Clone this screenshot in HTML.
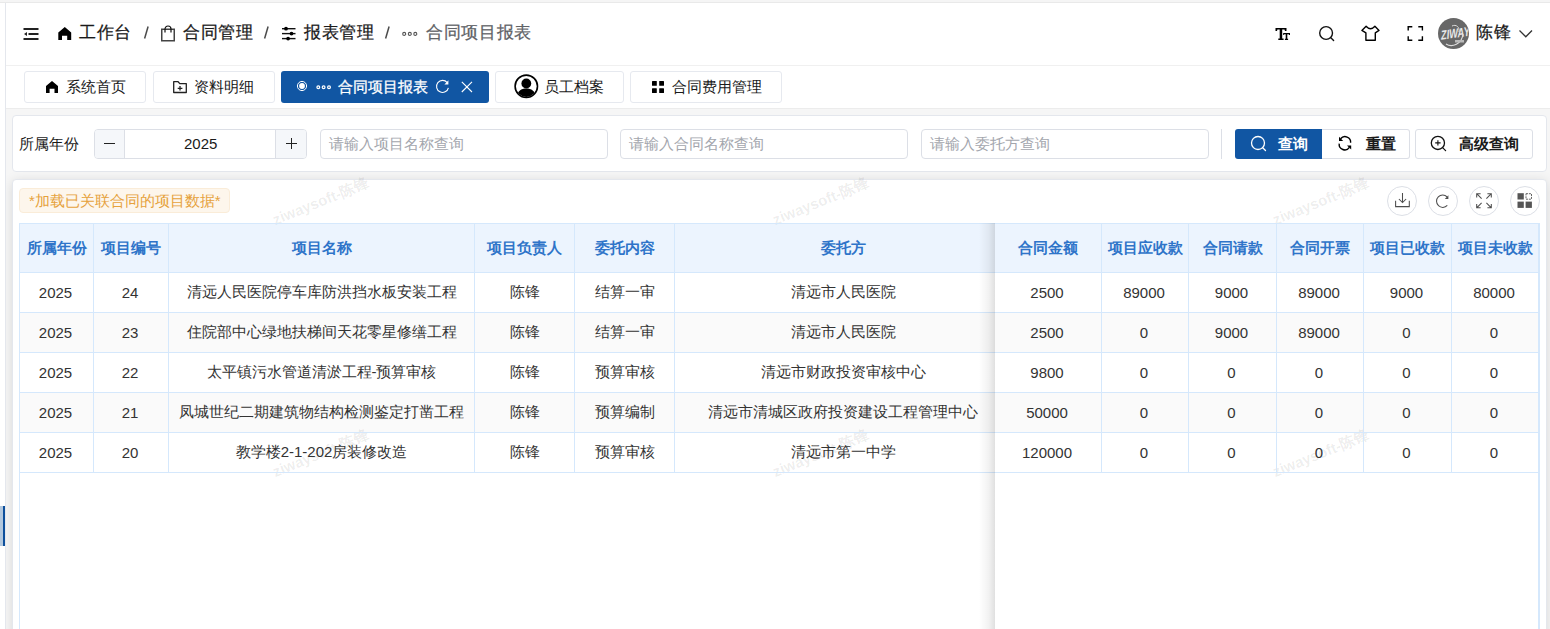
<!DOCTYPE html><html><head><meta charset="utf-8"><style>
*{box-sizing:border-box;margin:0;padding:0}
html,body{width:1550px;height:629px;overflow:hidden;background:#fff;font-family:"Liberation Sans",sans-serif;color:#303133}
.a{position:absolute}
.t{position:absolute;white-space:nowrap;line-height:1}
svg{position:absolute;overflow:visible}
</style></head><body>
<div class="a" style="left:0;top:0;width:1550px;height:2px;background:#f5f5f5"></div>
<div class="a" style="left:0;top:2px;width:1550px;height:1px;background:#e9e9e9"></div>
<div class="a" style="left:6px;top:65px;width:1544px;height:1px;background:#f0f0f0"></div>
<div class="a" style="left:6px;top:108px;width:1544px;height:521px;background:#f6f6f6"></div>
<div class="a" style="left:6px;top:108px;width:1544px;height:1px;background:#ececec"></div>
<svg style="left:23px;top:27px" width="16" height="14" viewBox="0 0 16 14">
<rect x="0.5" y="1" width="15" height="2" fill="#222"/>
<rect x="5.5" y="6" width="10" height="2" fill="#222"/>
<rect x="0.5" y="11" width="15" height="2" fill="#222"/>
<path d="M1 7 L4 5 L4 9 Z" fill="#222"/></svg>
<svg style="left:58px;top:27px" width="14" height="14" viewBox="0 0 14 14">
<path d="M0.3 5.5 L6.8 0 L13.2 5.5 L13.2 13 L9.2 13 L9.2 8.8 L4 8.8 L4 13 L0.3 13 Z" fill="#000"/></svg>
<div class="t" style="left:79px;top:24px;font-size:17px;color:#1a1a1a;font-weight:normal;letter-spacing:0.7px;-webkit-text-stroke:0.25px #1a1a1a;">工作台</div>
<svg style="left:143.6px;top:26px" width="5" height="13" viewBox="0 0 5 13"><line x1="4.1" y1="0.5" x2="0.6" y2="12.5" stroke="#4a4a4a" stroke-width="1.5"/></svg>
<svg style="left:161px;top:25px" width="14" height="17" viewBox="0 0 14 17">
<rect x="0.75" y="4.25" width="12.5" height="11.5" fill="none" stroke="#444" stroke-width="1.5"/>
<path d="M4 7.5 V4 A3 3 0 0 1 10 4 V7.5" fill="none" stroke="#111" stroke-width="1.2"/></svg>
<div class="t" style="left:183px;top:24px;font-size:17px;color:#1a1a1a;font-weight:normal;letter-spacing:0.7px;-webkit-text-stroke:0.25px #1a1a1a;">合同管理</div>
<svg style="left:264px;top:26px" width="5" height="13" viewBox="0 0 5 13"><line x1="4.1" y1="0.5" x2="0.6" y2="12.5" stroke="#4a4a4a" stroke-width="1.5"/></svg>
<svg style="left:282px;top:26px" width="14" height="15" viewBox="0 0 14 15">
<g stroke="#111" stroke-width="1.4"><line x1="0" y1="2.7" x2="13.5" y2="2.7"/><line x1="0" y1="7.6" x2="13.5" y2="7.6"/><line x1="0" y1="12.6" x2="13.5" y2="12.6"/></g>
<g fill="#000"><circle cx="4" cy="2.7" r="1.9"/><circle cx="9.5" cy="7.6" r="1.9"/><circle cx="6.1" cy="12.6" r="1.9"/></g></svg>
<div class="t" style="left:304px;top:24px;font-size:17px;color:#1a1a1a;font-weight:normal;letter-spacing:0.7px;-webkit-text-stroke:0.25px #1a1a1a;">报表管理</div>
<svg style="left:385.3px;top:26px" width="5" height="13" viewBox="0 0 5 13"><line x1="4.1" y1="0.5" x2="0.6" y2="12.5" stroke="#4a4a4a" stroke-width="1.5"/></svg>
<svg style="left:402px;top:31px" width="16" height="6" viewBox="0 0 16 6">
<g fill="none" stroke="#555" stroke-width="1.1"><circle cx="2.2" cy="2.9" r="1.5"/><circle cx="7.8" cy="2.9" r="1.5"/><circle cx="13.3" cy="2.9" r="1.5"/></g></svg>
<div class="t" style="left:426px;top:24px;font-size:17px;color:#606266;font-weight:normal;letter-spacing:0.7px;-webkit-text-stroke:0.25px #606266;">合同项目报表</div>
<svg style="left:1275px;top:27px" width="16" height="14" viewBox="0 0 16 14">
<path d="M0.5 1 H11.5 V4 H10 L9.5 2.6 H7.2 V11.4 H8.6 V13 H3.3 V11.4 H4.7 V2.6 H2.4 L2 4 H0.5 Z" fill="#000"/>
<path d="M8.2 6 H15 V8 H14 L13.7 7.2 H12.3 V11.8 H13.1 V13 H9.9 V11.8 H10.7 V7.2 H9.3 L9 8 H8.2 Z" fill="#000"/></svg>
<svg style="left:1318px;top:25px" width="17" height="17" viewBox="0 0 17 17">
<circle cx="8.1" cy="8" r="6.4" fill="none" stroke="#111" stroke-width="1.4"/>
<line x1="12.8" y1="12.7" x2="15.6" y2="15.5" stroke="#111" stroke-width="1.4" stroke-linecap="round"/></svg>
<svg style="left:1361px;top:25px" width="20" height="17" viewBox="0 0 20 17">
<path d="M5.1 1.3 Q9.5 6.2 13.9 1.3 L18 5.4 L14.3 7.8 V15.3 H4.9 V7.8 L0.9 5.4 Z" fill="none" stroke="#000" stroke-width="1.4" stroke-linejoin="round"/></svg>
<svg style="left:1407px;top:25px" width="17" height="17" viewBox="0 0 17 17">
<path d="M1.2 5.5 V1.8 H5.3 M11.3 1.8 H15.4 V5.5 M15.4 11.2 V15.3 H11.3 M5.3 15.3 H1.2 V11.2" fill="none" stroke="#000" stroke-width="1.4"/></svg>
<div class="a" style="left:1438px;top:18px;width:31px;height:31px;border-radius:50%;background:#676767;overflow:hidden">
<div class="t" style="left:-2px;top:9px;width:35px;text-align:center;font-size:13px;font-weight:bold;color:#e8e8e8;font-style:italic;transform:scaleX(0.72) rotate(-6deg)">ZIWAY</div>
<svg style="left:0;top:0" width="31" height="31" viewBox="0 0 31 31"><path d="M8 26 C14 30 24 26 25 16" fill="none" stroke="#ddd" stroke-width="1.2"/><path d="M14 8 C18 6 22 9 21 14" fill="none" stroke="#ddd" stroke-width="1"/>
<rect x="17" y="22" width="9" height="2.5" fill="#bbb"/></svg></div>
<div class="t" style="left:1476px;top:24px;font-size:17px;color:#1a1a1a;font-weight:normal;letter-spacing:0.7px;-webkit-text-stroke:0.25px #1a1a1a;">陈锋</div>
<svg style="left:1518px;top:29px" width="16" height="10" viewBox="0 0 16 10">
<path d="M1.5 1.5 L7.8 7.8 L14 1.5" fill="none" stroke="#333" stroke-width="1.3"/></svg>
<div class="a" style="left:24px;top:71px;width:122px;height:32px;background:#fff;border:1px solid #e6e9ef;border-radius:3px"></div>
<div class="a" style="left:153px;top:71px;width:122px;height:32px;background:#fff;border:1px solid #e6e9ef;border-radius:3px"></div>
<div class="a" style="left:281px;top:71px;width:208px;height:32px;background:#1156a3;border-radius:3px"></div>
<div class="a" style="left:495px;top:71px;width:129px;height:32px;background:#fff;border:1px solid #e6e9ef;border-radius:3px"></div>
<div class="a" style="left:630px;top:71px;width:152px;height:32px;background:#fff;border:1px solid #e6e9ef;border-radius:3px"></div>
<svg style="left:46px;top:81px" width="13" height="12" viewBox="0 0 13 12">
<path d="M0 5 L6 0 L12 5 V12 H8.5 V7.8 H3.6 V12 H0 Z" fill="#000"/></svg>
<div class="t" style="left:66px;top:79px;font-size:15px;color:#1a1a1a;font-weight:normal;">系统首页</div>
<svg style="left:173px;top:81px" width="15" height="13" viewBox="0 0 15 13">
<path d="M0.7 0.7 H5.1 L6.8 2.6 H13.3 V11.5 H0.7 Z" fill="none" stroke="#222" stroke-width="1.3" stroke-linejoin="round"/>
<path d="M7 5 V9.6 M4.7 7.3 H9.4" stroke="#222" stroke-width="1.3"/></svg>
<div class="t" style="left:194px;top:79px;font-size:15px;color:#1a1a1a;font-weight:normal;">资料明细</div>
<svg style="left:296px;top:80px" width="12" height="12" viewBox="0 0 12 12">
<circle cx="6" cy="6" r="4.6" fill="none" stroke="#fff" stroke-width="1"/><circle cx="6" cy="6" r="2.9" fill="#fff"/></svg>
<svg style="left:316px;top:84px" width="16" height="6" viewBox="0 0 16 6">
<g fill="none" stroke="#fff" stroke-width="1.2"><circle cx="2.3" cy="3.3" r="1.4"/><circle cx="7.6" cy="3.3" r="1.4"/><circle cx="13" cy="3.3" r="1.4"/></g></svg>
<div class="t" style="left:338px;top:79px;font-size:15px;color:#fff;font-weight:normal;-webkit-text-stroke:0.3px #fff;">合同项目报表</div>
<svg style="left:435px;top:79px" width="16" height="16" viewBox="0 0 16 16">
<path d="M13.4 8.8 A6 6 0 1 1 12.2 3.6" fill="none" stroke="#fff" stroke-width="1.1"/>
<path d="M13.4 1.2 V5.4 H9.4 Z" fill="#fff"/></svg>
<svg style="left:461px;top:81px" width="12" height="12" viewBox="0 0 12 12">
<path d="M0.8 0.8 L11 11 M11 0.8 L0.8 11" stroke="#fff" stroke-width="1.1"/></svg>
<svg style="left:514px;top:74px" width="25" height="25" viewBox="0 0 25 25">
<defs><clipPath id="cp"><circle cx="12.3" cy="12.3" r="10.6"/></clipPath></defs>
<circle cx="12.3" cy="12.3" r="11.2" fill="none" stroke="#000" stroke-width="1.6"/>
<circle cx="12.3" cy="9.5" r="4.9" fill="#000"/>
<path d="M3 24 C3 17 7 14.5 12.3 14.5 C17.6 14.5 21.6 17 21.6 24 Z" fill="#000" clip-path="url(#cp)"/></svg>
<div class="t" style="left:544px;top:79px;font-size:15px;color:#1a1a1a;font-weight:normal;">员工档案</div>
<svg style="left:652px;top:81px" width="13" height="13" viewBox="0 0 13 13">
<g fill="#000"><rect x="0" y="0" width="4.8" height="4.8" rx="0.5"/><rect x="7.2" y="0" width="4.8" height="4.8" rx="0.5"/><rect x="0" y="7.2" width="4.8" height="4.8" rx="0.5"/><rect x="7.2" y="7.2" width="4.8" height="4.8" rx="0.5"/></g></svg>
<div class="t" style="left:672px;top:79px;font-size:15px;color:#1a1a1a;font-weight:normal;">合同费用管理</div>
<div class="a" style="left:12px;top:115px;width:1535px;height:57px;background:#fff;border:1px solid #e4e7ed;border-radius:4px"></div>
<div class="t" style="left:19px;top:136px;font-size:15px;color:#1a1a1a;font-weight:normal;">所属年份</div>
<div class="a" style="left:94px;top:129px;width:213px;height:30px;border:1px solid #dcdfe6;border-radius:4px;background:#fff;overflow:hidden"><div class="a" style="left:0;top:0;width:30px;height:28px;background:#f5f7fa;border-right:1px solid #dcdfe6"></div><div class="a" style="right:0;top:0;width:31px;height:28px;background:#f5f7fa;border-left:1px solid #dcdfe6"></div></div>
<div class="a" style="left:104px;top:143px;width:11px;height:1px;background:#222"></div>
<div class="a" style="left:286px;top:143px;width:11px;height:1px;background:#222"></div>
<div class="a" style="left:291px;top:138px;width:1px;height:11px;background:#222"></div>
<div class="t" style="left:184px;top:136px;font-size:15px;color:#1a1a1a;font-weight:normal;">2025</div>
<div class="a" style="left:320px;top:129px;width:288px;height:30px;border:1px solid #dcdfe6;border-radius:4px;background:#fff"></div>
<div class="t" style="left:329px;top:136px;font-size:15px;color:#a3a6ad;font-weight:normal;">请输入项目名称查询</div>
<div class="a" style="left:620px;top:129px;width:288px;height:30px;border:1px solid #dcdfe6;border-radius:4px;background:#fff"></div>
<div class="t" style="left:629px;top:136px;font-size:15px;color:#a3a6ad;font-weight:normal;">请输入合同名称查询</div>
<div class="a" style="left:921px;top:129px;width:288px;height:30px;border:1px solid #dcdfe6;border-radius:4px;background:#fff"></div>
<div class="t" style="left:930px;top:136px;font-size:15px;color:#a3a6ad;font-weight:normal;">请输入委托方查询</div>
<div class="a" style="left:1221px;top:129px;width:1px;height:30px;background:#dcdfe6"></div>
<div class="a" style="left:1235px;top:129px;width:88px;height:30px;background:#1156a3;border-radius:3px 0 0 3px"></div>
<div class="a" style="left:1322px;top:129px;width:88px;height:30px;border:1px solid #dcdfe6;border-left:none;border-radius:0 3px 3px 0;background:#fff"></div>
<div class="a" style="left:1415px;top:129px;width:118px;height:30px;border:1px solid #dcdfe6;border-radius:3px;background:#fff"></div>
<svg style="left:1250px;top:135px" width="17" height="17" viewBox="0 0 17 17">
<circle cx="8" cy="8" r="6.5" fill="none" stroke="#fff" stroke-width="1.3"/>
<line x1="12.7" y1="12.7" x2="15.5" y2="15.5" stroke="#fff" stroke-width="1.3" stroke-linecap="round"/></svg>
<div class="t" style="left:1278px;top:136px;font-size:15px;color:#fff;font-weight:bold;">查询</div>
<svg style="left:1338px;top:136px" width="15" height="15" viewBox="0 0 15 15">
<path d="M12.6 6.8 A5.6 5.6 0 0 0 2.6 2.8" fill="none" stroke="#000" stroke-width="1.4"/>
<path d="M1 0.8 V5 H5.2 Z" fill="#000"/>
<path d="M1.2 7.6 A5.6 5.6 0 0 0 11.4 11.4" fill="none" stroke="#000" stroke-width="1.4"/>
<path d="M13.2 13.6 V9.4 H9 Z" fill="#000"/></svg>
<div class="t" style="left:1366px;top:136px;font-size:15px;color:#1a1a1a;font-weight:bold;">重置</div>
<svg style="left:1430px;top:135px" width="17" height="17" viewBox="0 0 17 17">
<circle cx="7.9" cy="7.9" r="6.6" fill="none" stroke="#111" stroke-width="1.3"/>
<line x1="12.6" y1="12.6" x2="15.6" y2="15.6" stroke="#111" stroke-width="1.3" stroke-linecap="round"/>
<path d="M7.9 5.2 V10.6 M5.2 7.9 H10.6" stroke="#111" stroke-width="1.1"/></svg>
<div class="t" style="left:1459px;top:136px;font-size:15px;color:#1a1a1a;font-weight:bold;">高级查询</div>
<div class="a" style="left:12px;top:179px;width:1535px;height:460px;background:#fff;border:1px solid #e4e7ed;border-radius:4px;box-shadow:0 2px 12px rgba(0,0,0,0.12)"></div>
<div class="a" style="left:19px;top:188px;width:211px;height:25px;background:#fdf6ec;border:1px solid #faecd8;border-radius:4px"></div>
<div class="t" style="left:29px;top:193px;font-size:15px;color:#e6a23c;font-weight:normal;">*加载已关联合同的项目数据*</div>
<div class="a" style="left:1387px;top:186px;width:30px;height:30px;border:1px solid #dcdfe6;border-radius:50%;background:#fff"></div>
<div class="a" style="left:1428px;top:186px;width:30px;height:30px;border:1px solid #dcdfe6;border-radius:50%;background:#fff"></div>
<div class="a" style="left:1469px;top:186px;width:30px;height:30px;border:1px solid #dcdfe6;border-radius:50%;background:#fff"></div>
<div class="a" style="left:1510px;top:186px;width:30px;height:30px;border:1px solid #dcdfe6;border-radius:50%;background:#fff"></div>
<svg style="left:1395px;top:193px" width="15" height="15" viewBox="0 0 15 15">
<path d="M7.5 0 V9.6 M3.9 6 L7.5 9.6 L11.1 6 M0.6 7.8 V13.6 H14.3 V7.8" fill="none" stroke="#4d4d4d" stroke-width="1.05"/></svg>
<svg style="left:1435px;top:194px" width="15" height="15" viewBox="0 0 15 15">
<path d="M12.3 11.4 A6.2 6.2 0 1 1 12.1 2.8" fill="none" stroke="#4d4d4d" stroke-width="1.05"/>
<path d="M13.4 1.3 V4.9 H9.8 Z" fill="#4d4d4d"/></svg>
<svg style="left:1476px;top:192.5px" width="17" height="16" viewBox="0 0 17 16">
<path d="M0.7 4.6 V0.7 H4.6 M0.7 0.7 L5.6 5.6 M15.3 4.6 V0.7 H11.4 M15.3 0.7 L10.4 5.6 M0.7 10.9 V14.8 H4.6 M0.7 14.8 L5.6 9.9 M15.3 10.9 V14.8 H11.4 M15.3 14.8 L10.4 9.9" fill="none" stroke="#4d4d4d" stroke-width="1.05"/></svg>
<svg style="left:1517px;top:193px" width="16" height="16" viewBox="0 0 16 16">
<rect x="0.5" y="0.2" width="6.3" height="6.3" fill="#555"/>
<rect x="9" y="0.7" width="5.5" height="5.5" fill="none" stroke="#555" stroke-width="0.9" stroke-dasharray="2 0.9"/>
<rect x="0.5" y="8.6" width="6.3" height="6.3" fill="#555"/><rect x="8.6" y="8.6" width="6.3" height="6.3" fill="#555"/></svg>
<div class="a" style="left:19px;top:223px;width:1521px;height:50px;background:#ecf4fe"></div>
<div class="a" style="left:20px;top:273px;width:1519px;height:39px;background:#fff"></div>
<div class="a" style="left:20px;top:313px;width:1519px;height:39px;background:#fafafa"></div>
<div class="a" style="left:20px;top:353px;width:1519px;height:39px;background:#fff"></div>
<div class="a" style="left:20px;top:393px;width:1519px;height:39px;background:#fafafa"></div>
<div class="a" style="left:20px;top:433px;width:1519px;height:39px;background:#fff"></div>
<div class="t" style="left:276px;top:212px;font-size:15px;font-weight:bold;color:rgba(0,0,0,0.08);transform:rotate(-22deg);transform-origin:0 100%">ziwaysoft-陈锋</div>
<div class="t" style="left:776px;top:212px;font-size:15px;font-weight:bold;color:rgba(0,0,0,0.08);transform:rotate(-22deg);transform-origin:0 100%">ziwaysoft-陈锋</div>
<div class="t" style="left:1276px;top:212px;font-size:15px;font-weight:bold;color:rgba(0,0,0,0.08);transform:rotate(-22deg);transform-origin:0 100%">ziwaysoft-陈锋</div>
<div class="t" style="left:276px;top:464px;font-size:15px;font-weight:bold;color:rgba(0,0,0,0.08);transform:rotate(-22deg);transform-origin:0 100%">ziwaysoft-陈锋</div>
<div class="t" style="left:776px;top:464px;font-size:15px;font-weight:bold;color:rgba(0,0,0,0.08);transform:rotate(-22deg);transform-origin:0 100%">ziwaysoft-陈锋</div>
<div class="t" style="left:1276px;top:464px;font-size:15px;font-weight:bold;color:rgba(0,0,0,0.08);transform:rotate(-22deg);transform-origin:0 100%">ziwaysoft-陈锋</div>
<div class="a" style="left:19px;top:223px;width:1521px;height:1px;background:#d5e8fc"></div>
<div class="a" style="left:19px;top:272px;width:1521px;height:1px;background:#d5e8fc"></div>
<div class="a" style="left:19px;top:312px;width:1521px;height:1px;background:#d5e8fc"></div>
<div class="a" style="left:19px;top:352px;width:1521px;height:1px;background:#d5e8fc"></div>
<div class="a" style="left:19px;top:392px;width:1521px;height:1px;background:#d5e8fc"></div>
<div class="a" style="left:19px;top:432px;width:1521px;height:1px;background:#d5e8fc"></div>
<div class="a" style="left:19px;top:472px;width:1521px;height:1px;background:#d5e8fc"></div>
<div class="a" style="left:19px;top:223px;width:1px;height:406px;background:#d5e8fc"></div>
<div class="a" style="left:93px;top:223px;width:1px;height:250px;background:#d5e8fc"></div>
<div class="a" style="left:168px;top:223px;width:1px;height:250px;background:#d5e8fc"></div>
<div class="a" style="left:474px;top:223px;width:1px;height:250px;background:#d5e8fc"></div>
<div class="a" style="left:574px;top:223px;width:1px;height:250px;background:#d5e8fc"></div>
<div class="a" style="left:674px;top:223px;width:1px;height:250px;background:#d5e8fc"></div>
<div class="a" style="left:20px;top:224px;width:73px;height:48px;display:flex;align-items:center;justify-content:center;white-space:nowrap;font-size:15px;font-weight:bold;color:#2f74c9">所属年份</div>
<div class="a" style="left:94px;top:224px;width:74px;height:48px;display:flex;align-items:center;justify-content:center;white-space:nowrap;font-size:15px;font-weight:bold;color:#2f74c9">项目编号</div>
<div class="a" style="left:169px;top:224px;width:305px;height:48px;display:flex;align-items:center;justify-content:center;white-space:nowrap;font-size:15px;font-weight:bold;color:#2f74c9">项目名称</div>
<div class="a" style="left:475px;top:224px;width:99px;height:48px;display:flex;align-items:center;justify-content:center;white-space:nowrap;font-size:15px;font-weight:bold;color:#2f74c9">项目负责人</div>
<div class="a" style="left:575px;top:224px;width:99px;height:48px;display:flex;align-items:center;justify-content:center;white-space:nowrap;font-size:15px;font-weight:bold;color:#2f74c9">委托内容</div>
<div class="a" style="left:675px;top:224px;width:336px;height:48px;display:flex;align-items:center;justify-content:center;white-space:nowrap;font-size:15px;font-weight:bold;color:#2f74c9">委托方</div>
<div class="a" style="left:20px;top:273px;width:73px;height:39px;display:flex;align-items:center;justify-content:center;white-space:nowrap;font-size:15px;color:#333;padding-right:2px">2025</div>
<div class="a" style="left:94px;top:273px;width:74px;height:39px;display:flex;align-items:center;justify-content:center;white-space:nowrap;font-size:15px;color:#333;padding-right:2px">24</div>
<div class="a" style="left:169px;top:273px;width:305px;height:39px;display:flex;align-items:center;justify-content:center;white-space:nowrap;font-size:15px;color:#333">清远人民医院停车库防洪挡水板安装工程</div>
<div class="a" style="left:475px;top:273px;width:99px;height:39px;display:flex;align-items:center;justify-content:center;white-space:nowrap;font-size:15px;color:#333">陈锋</div>
<div class="a" style="left:575px;top:273px;width:99px;height:39px;display:flex;align-items:center;justify-content:center;white-space:nowrap;font-size:15px;color:#333">结算一审</div>
<div class="a" style="left:675px;top:273px;width:336px;height:39px;display:flex;align-items:center;justify-content:center;white-space:nowrap;font-size:15px;color:#333">清远市人民医院</div>
<div class="a" style="left:20px;top:313px;width:73px;height:39px;display:flex;align-items:center;justify-content:center;white-space:nowrap;font-size:15px;color:#333;padding-right:2px">2025</div>
<div class="a" style="left:94px;top:313px;width:74px;height:39px;display:flex;align-items:center;justify-content:center;white-space:nowrap;font-size:15px;color:#333;padding-right:2px">23</div>
<div class="a" style="left:169px;top:313px;width:305px;height:39px;display:flex;align-items:center;justify-content:center;white-space:nowrap;font-size:15px;color:#333">住院部中心绿地扶梯间天花零星修缮工程</div>
<div class="a" style="left:475px;top:313px;width:99px;height:39px;display:flex;align-items:center;justify-content:center;white-space:nowrap;font-size:15px;color:#333">陈锋</div>
<div class="a" style="left:575px;top:313px;width:99px;height:39px;display:flex;align-items:center;justify-content:center;white-space:nowrap;font-size:15px;color:#333">结算一审</div>
<div class="a" style="left:675px;top:313px;width:336px;height:39px;display:flex;align-items:center;justify-content:center;white-space:nowrap;font-size:15px;color:#333">清远市人民医院</div>
<div class="a" style="left:20px;top:353px;width:73px;height:39px;display:flex;align-items:center;justify-content:center;white-space:nowrap;font-size:15px;color:#333;padding-right:2px">2025</div>
<div class="a" style="left:94px;top:353px;width:74px;height:39px;display:flex;align-items:center;justify-content:center;white-space:nowrap;font-size:15px;color:#333;padding-right:2px">22</div>
<div class="a" style="left:169px;top:353px;width:305px;height:39px;display:flex;align-items:center;justify-content:center;white-space:nowrap;font-size:15px;color:#333">太平镇污水管道清淤工程-预算审核</div>
<div class="a" style="left:475px;top:353px;width:99px;height:39px;display:flex;align-items:center;justify-content:center;white-space:nowrap;font-size:15px;color:#333">陈锋</div>
<div class="a" style="left:575px;top:353px;width:99px;height:39px;display:flex;align-items:center;justify-content:center;white-space:nowrap;font-size:15px;color:#333">预算审核</div>
<div class="a" style="left:675px;top:353px;width:336px;height:39px;display:flex;align-items:center;justify-content:center;white-space:nowrap;font-size:15px;color:#333">清远市财政投资审核中心</div>
<div class="a" style="left:20px;top:393px;width:73px;height:39px;display:flex;align-items:center;justify-content:center;white-space:nowrap;font-size:15px;color:#333;padding-right:2px">2025</div>
<div class="a" style="left:94px;top:393px;width:74px;height:39px;display:flex;align-items:center;justify-content:center;white-space:nowrap;font-size:15px;color:#333;padding-right:2px">21</div>
<div class="a" style="left:169px;top:393px;width:305px;height:39px;display:flex;align-items:center;justify-content:center;white-space:nowrap;font-size:15px;color:#333">凤城世纪二期建筑物结构检测鉴定打凿工程</div>
<div class="a" style="left:475px;top:393px;width:99px;height:39px;display:flex;align-items:center;justify-content:center;white-space:nowrap;font-size:15px;color:#333">陈锋</div>
<div class="a" style="left:575px;top:393px;width:99px;height:39px;display:flex;align-items:center;justify-content:center;white-space:nowrap;font-size:15px;color:#333">预算编制</div>
<div class="a" style="left:675px;top:393px;width:336px;height:39px;display:flex;align-items:center;justify-content:center;white-space:nowrap;font-size:15px;color:#333">清远市清城区政府投资建设工程管理中心</div>
<div class="a" style="left:20px;top:433px;width:73px;height:39px;display:flex;align-items:center;justify-content:center;white-space:nowrap;font-size:15px;color:#333;padding-right:2px">2025</div>
<div class="a" style="left:94px;top:433px;width:74px;height:39px;display:flex;align-items:center;justify-content:center;white-space:nowrap;font-size:15px;color:#333;padding-right:2px">20</div>
<div class="a" style="left:169px;top:433px;width:305px;height:39px;display:flex;align-items:center;justify-content:center;white-space:nowrap;font-size:15px;color:#333">教学楼2-1-202房装修改造</div>
<div class="a" style="left:475px;top:433px;width:99px;height:39px;display:flex;align-items:center;justify-content:center;white-space:nowrap;font-size:15px;color:#333">陈锋</div>
<div class="a" style="left:575px;top:433px;width:99px;height:39px;display:flex;align-items:center;justify-content:center;white-space:nowrap;font-size:15px;color:#333">预算审核</div>
<div class="a" style="left:675px;top:433px;width:336px;height:39px;display:flex;align-items:center;justify-content:center;white-space:nowrap;font-size:15px;color:#333">清远市第一中学</div>
<div class="a" style="left:979px;top:223px;width:16px;height:406px;background:linear-gradient(to left,rgba(0,0,0,0.12),rgba(0,0,0,0.05) 40%,rgba(0,0,0,0))"></div>
<div class="a" style="left:995px;top:223px;width:545px;height:406px;background:#fff"></div>
<div class="a" style="left:995px;top:223px;width:545px;height:50px;background:#ecf4fe"></div>
<div class="a" style="left:995px;top:273px;width:544px;height:39px;background:#fff"></div>
<div class="a" style="left:995px;top:313px;width:544px;height:39px;background:#fafafa"></div>
<div class="a" style="left:995px;top:353px;width:544px;height:39px;background:#fff"></div>
<div class="a" style="left:995px;top:393px;width:544px;height:39px;background:#fafafa"></div>
<div class="a" style="left:995px;top:433px;width:544px;height:39px;background:#fff"></div>
<div class="t" style="left:1276px;top:464px;font-size:15px;font-weight:bold;color:rgba(0,0,0,0.08);transform:rotate(-22deg);transform-origin:0 100%">ziwaysoft-陈锋</div>
<div class="a" style="left:995px;top:223px;width:545px;height:1px;background:#d5e8fc"></div>
<div class="a" style="left:995px;top:272px;width:545px;height:1px;background:#d5e8fc"></div>
<div class="a" style="left:995px;top:312px;width:545px;height:1px;background:#d5e8fc"></div>
<div class="a" style="left:995px;top:352px;width:545px;height:1px;background:#d5e8fc"></div>
<div class="a" style="left:995px;top:392px;width:545px;height:1px;background:#d5e8fc"></div>
<div class="a" style="left:995px;top:432px;width:545px;height:1px;background:#d5e8fc"></div>
<div class="a" style="left:995px;top:472px;width:545px;height:1px;background:#d5e8fc"></div>
<div class="a" style="left:1101px;top:223px;width:1px;height:250px;background:#d5e8fc"></div>
<div class="a" style="left:1188px;top:223px;width:1px;height:250px;background:#d5e8fc"></div>
<div class="a" style="left:1276px;top:223px;width:1px;height:250px;background:#d5e8fc"></div>
<div class="a" style="left:1363px;top:223px;width:1px;height:250px;background:#d5e8fc"></div>
<div class="a" style="left:1451px;top:223px;width:1px;height:250px;background:#d5e8fc"></div>
<div class="a" style="left:1538px;top:223px;width:1px;height:250px;background:#d5e8fc"></div>
<div class="a" style="left:1538px;top:223px;width:2px;height:406px;background:#d5e8fc"></div>
<div class="a" style="left:995px;top:224px;width:106px;height:48px;display:flex;align-items:center;justify-content:center;white-space:nowrap;font-size:15px;font-weight:bold;color:#2f74c9">合同金额</div>
<div class="a" style="left:1102px;top:224px;width:86px;height:48px;display:flex;align-items:center;justify-content:center;white-space:nowrap;font-size:15px;font-weight:bold;color:#2f74c9">项目应收款</div>
<div class="a" style="left:1189px;top:224px;width:87px;height:48px;display:flex;align-items:center;justify-content:center;white-space:nowrap;font-size:15px;font-weight:bold;color:#2f74c9">合同请款</div>
<div class="a" style="left:1277px;top:224px;width:86px;height:48px;display:flex;align-items:center;justify-content:center;white-space:nowrap;font-size:15px;font-weight:bold;color:#2f74c9">合同开票</div>
<div class="a" style="left:1364px;top:224px;width:87px;height:48px;display:flex;align-items:center;justify-content:center;white-space:nowrap;font-size:15px;font-weight:bold;color:#2f74c9">项目已收款</div>
<div class="a" style="left:1452px;top:224px;width:86px;height:48px;display:flex;align-items:center;justify-content:center;white-space:nowrap;font-size:15px;font-weight:bold;color:#2f74c9">项目未收款</div>
<div class="a" style="left:995px;top:273px;width:106px;height:39px;display:flex;align-items:center;justify-content:center;white-space:nowrap;font-size:15px;color:#333;padding-right:2px">2500</div>
<div class="a" style="left:1102px;top:273px;width:86px;height:39px;display:flex;align-items:center;justify-content:center;white-space:nowrap;font-size:15px;color:#333;padding-right:2px">89000</div>
<div class="a" style="left:1189px;top:273px;width:87px;height:39px;display:flex;align-items:center;justify-content:center;white-space:nowrap;font-size:15px;color:#333;padding-right:2px">9000</div>
<div class="a" style="left:1277px;top:273px;width:86px;height:39px;display:flex;align-items:center;justify-content:center;white-space:nowrap;font-size:15px;color:#333;padding-right:2px">89000</div>
<div class="a" style="left:1364px;top:273px;width:87px;height:39px;display:flex;align-items:center;justify-content:center;white-space:nowrap;font-size:15px;color:#333;padding-right:2px">9000</div>
<div class="a" style="left:1452px;top:273px;width:86px;height:39px;display:flex;align-items:center;justify-content:center;white-space:nowrap;font-size:15px;color:#333;padding-right:2px">80000</div>
<div class="a" style="left:995px;top:313px;width:106px;height:39px;display:flex;align-items:center;justify-content:center;white-space:nowrap;font-size:15px;color:#333;padding-right:2px">2500</div>
<div class="a" style="left:1102px;top:313px;width:86px;height:39px;display:flex;align-items:center;justify-content:center;white-space:nowrap;font-size:15px;color:#333;padding-right:2px">0</div>
<div class="a" style="left:1189px;top:313px;width:87px;height:39px;display:flex;align-items:center;justify-content:center;white-space:nowrap;font-size:15px;color:#333;padding-right:2px">9000</div>
<div class="a" style="left:1277px;top:313px;width:86px;height:39px;display:flex;align-items:center;justify-content:center;white-space:nowrap;font-size:15px;color:#333;padding-right:2px">89000</div>
<div class="a" style="left:1364px;top:313px;width:87px;height:39px;display:flex;align-items:center;justify-content:center;white-space:nowrap;font-size:15px;color:#333;padding-right:2px">0</div>
<div class="a" style="left:1452px;top:313px;width:86px;height:39px;display:flex;align-items:center;justify-content:center;white-space:nowrap;font-size:15px;color:#333;padding-right:2px">0</div>
<div class="a" style="left:995px;top:353px;width:106px;height:39px;display:flex;align-items:center;justify-content:center;white-space:nowrap;font-size:15px;color:#333;padding-right:2px">9800</div>
<div class="a" style="left:1102px;top:353px;width:86px;height:39px;display:flex;align-items:center;justify-content:center;white-space:nowrap;font-size:15px;color:#333;padding-right:2px">0</div>
<div class="a" style="left:1189px;top:353px;width:87px;height:39px;display:flex;align-items:center;justify-content:center;white-space:nowrap;font-size:15px;color:#333;padding-right:2px">0</div>
<div class="a" style="left:1277px;top:353px;width:86px;height:39px;display:flex;align-items:center;justify-content:center;white-space:nowrap;font-size:15px;color:#333;padding-right:2px">0</div>
<div class="a" style="left:1364px;top:353px;width:87px;height:39px;display:flex;align-items:center;justify-content:center;white-space:nowrap;font-size:15px;color:#333;padding-right:2px">0</div>
<div class="a" style="left:1452px;top:353px;width:86px;height:39px;display:flex;align-items:center;justify-content:center;white-space:nowrap;font-size:15px;color:#333;padding-right:2px">0</div>
<div class="a" style="left:995px;top:393px;width:106px;height:39px;display:flex;align-items:center;justify-content:center;white-space:nowrap;font-size:15px;color:#333;padding-right:2px">50000</div>
<div class="a" style="left:1102px;top:393px;width:86px;height:39px;display:flex;align-items:center;justify-content:center;white-space:nowrap;font-size:15px;color:#333;padding-right:2px">0</div>
<div class="a" style="left:1189px;top:393px;width:87px;height:39px;display:flex;align-items:center;justify-content:center;white-space:nowrap;font-size:15px;color:#333;padding-right:2px">0</div>
<div class="a" style="left:1277px;top:393px;width:86px;height:39px;display:flex;align-items:center;justify-content:center;white-space:nowrap;font-size:15px;color:#333;padding-right:2px">0</div>
<div class="a" style="left:1364px;top:393px;width:87px;height:39px;display:flex;align-items:center;justify-content:center;white-space:nowrap;font-size:15px;color:#333;padding-right:2px">0</div>
<div class="a" style="left:1452px;top:393px;width:86px;height:39px;display:flex;align-items:center;justify-content:center;white-space:nowrap;font-size:15px;color:#333;padding-right:2px">0</div>
<div class="a" style="left:995px;top:433px;width:106px;height:39px;display:flex;align-items:center;justify-content:center;white-space:nowrap;font-size:15px;color:#333;padding-right:2px">120000</div>
<div class="a" style="left:1102px;top:433px;width:86px;height:39px;display:flex;align-items:center;justify-content:center;white-space:nowrap;font-size:15px;color:#333;padding-right:2px">0</div>
<div class="a" style="left:1189px;top:433px;width:87px;height:39px;display:flex;align-items:center;justify-content:center;white-space:nowrap;font-size:15px;color:#333;padding-right:2px">0</div>
<div class="a" style="left:1277px;top:433px;width:86px;height:39px;display:flex;align-items:center;justify-content:center;white-space:nowrap;font-size:15px;color:#333;padding-right:2px">0</div>
<div class="a" style="left:1364px;top:433px;width:87px;height:39px;display:flex;align-items:center;justify-content:center;white-space:nowrap;font-size:15px;color:#333;padding-right:2px">0</div>
<div class="a" style="left:1452px;top:433px;width:86px;height:39px;display:flex;align-items:center;justify-content:center;white-space:nowrap;font-size:15px;color:#333;padding-right:2px">0</div>
<div class="a" style="left:0;top:3px;width:5px;height:626px;background:#fff"></div>
<div class="a" style="left:5px;top:3px;width:1px;height:626px;background:#e4e7ed"></div>
<div class="a" style="left:0;top:506px;width:3px;height:40px;background:#b3c8de"></div>
<div class="a" style="left:3px;top:506px;width:2px;height:40px;background:#0d4f9c"></div>
</body></html>
